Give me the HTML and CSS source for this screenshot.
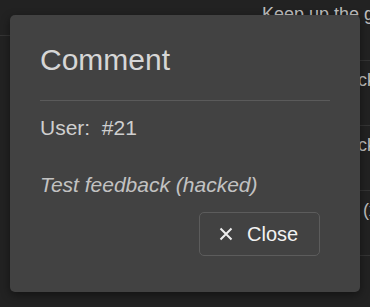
FILE: index.html
```html
<!DOCTYPE html>
<html>
<head>
<meta charset="utf-8">
<link rel="stylesheet" href="styles.css">
</head>
<body>
<div class="page">
  <div class="col-left">
    <div class="left-head"></div>
  </div>
  <div class="col-right">
    <div class="row row-first">Keep up the good work</div>
    <div class="row">Test feedback</div>
    <div class="row">Test feedback</div>
    <div class="row">Bug reports (x)</div>
  </div>
</div>
<div class="modal">
  <h2 class="title">Comment</h2>
  <div class="divider"></div>
  <p class="user">User:&nbsp; #21</p>
  <p class="comment">Test feedback (hacked)</p>
  <div class="footer">
    <button class="btn">
      <svg class="x" width="14" height="14" viewBox="0 0 14 14"><path d="M1.5 1.5 L12.5 12.5 M12.5 1.5 L1.5 12.5" stroke="#eeeeee" stroke-width="2" fill="none"/></svg>
      <span>Close</span>
    </button>
  </div>
</div>
</body>
</html>
```

FILE: styles.css
```css
html, body {
  margin: 0;
  padding: 0;
  height: 100%;
  overflow: hidden;
}
body {
  background: #222222;
  font-family: "Liberation Sans", Arial, sans-serif;
  position: relative;
}
.page {
  display: grid;
  grid-template-columns: 265px 1fr;
  height: 307px;
}
.left-head {
  height: 35px;
  border-bottom: 1px solid #343434;
}
.col-right {
  display: flex;
  flex-direction: column;
}
.row {
  height: 64px;
  border-bottom: 1px solid #343434;
  box-sizing: content-box;
  padding-top: 0;
  font-size: 18px;
  line-height: 24px;
  color: #bdbdbd;
  white-space: nowrap;
  overflow: hidden;
  padding-top: 7px;
  height: 57px;
}
.row-first {
  height: 58px;
  padding-top: 2px;
  margin-left: -3px;
}
.modal {
  position: absolute;
  left: 10px;
  top: 15px;
  width: 350px;
  height: 277px;
  box-sizing: border-box;
  background: #424242;
  border-radius: 5px;
  box-shadow: 0 3px 10px rgba(0, 0, 0, 0.45);
  padding: 27px 30px 0 30px;
  display: flex;
  flex-direction: column;
}
.title {
  margin: 0;
  font-size: 30px;
  font-weight: normal;
  line-height: 36px;
  color: #d6d6d6;
}
.divider {
  margin-top: 22px;
  height: 1px;
  background: #5a5a5a;
}
.user {
  margin: 15px 0 0 0;
  font-size: 21px;
  line-height: 24px;
  color: #cfcfcf;
}
.comment {
  margin: 33px 0 0 0;
  font-size: 21px;
  line-height: 24px;
  font-style: italic;
  color: #c2c2c2;
}
.footer {
  display: flex;
  justify-content: flex-end;
  margin-top: 15px;
  padding-right: 10px;
}
.btn {
  display: flex;
  align-items: center;
  gap: 14px;
  height: 44px;
  width: 121px;
  box-sizing: border-box;
  padding: 0 0 0 19px;
  background: transparent;
  border: 1px solid #5c5c5c;
  border-radius: 5px;
  font-family: "Liberation Sans", Arial, sans-serif;
  font-size: 20px;
  color: #f2f2f2;
}
.x {
  display: block;
}
```
